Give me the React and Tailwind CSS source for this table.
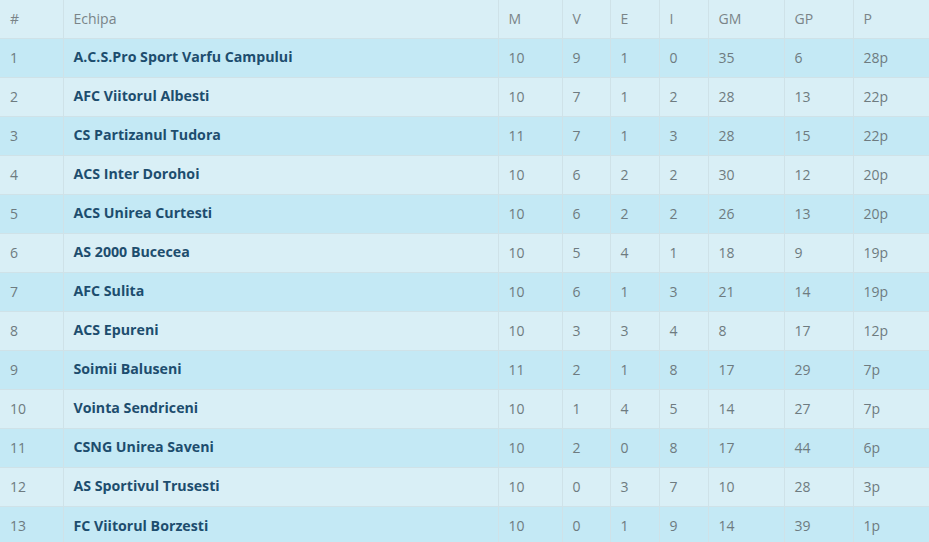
import React from "react";

const rows = [
  [1, "A.C.S.Pro Sport Varfu Campului", 10, 9, 1, 0, 35, 6, "28p"],
  [2, "AFC Viitorul Albesti", 10, 7, 1, 2, 28, 13, "22p"],
  [3, "CS Partizanul Tudora", 11, 7, 1, 3, 28, 15, "22p"],
  [4, "ACS Inter Dorohoi", 10, 6, 2, 2, 30, 12, "20p"],
  [5, "ACS Unirea Curtesti", 10, 6, 2, 2, 26, 13, "20p"],
  [6, "AS 2000 Bucecea", 10, 5, 4, 1, 18, 9, "19p"],
  [7, "AFC Sulita", 10, 6, 1, 3, 21, 14, "19p"],
  [8, "ACS Epureni", 10, 3, 3, 4, 8, 17, "12p"],
  [9, "Soimii Baluseni", 11, 2, 1, 8, 17, 29, "7p"],
  [10, "Vointa Sendriceni", 10, 1, 4, 5, 14, 27, "7p"],
  [11, "CSNG Unirea Saveni", 10, 2, 0, 8, 17, 44, "6p"],
  [12, "AS Sportivul Trusesti", 10, 0, 3, 7, 10, 28, "3p"],
  [13, "FC Viitorul Borzesti", 10, 0, 1, 9, 14, 39, "1p"],
];

const widths = ["w-[63px]", "w-[435px]", "w-[64px]", "w-[48px]", "w-[49px]", "w-[49px]", "w-[76px]", "w-[69px]", "w-[76px]"];
const heads = ["#", "Echipa", "M", "V", "E", "I", "GM", "GP", "P"];

export default function App() {
  return (
    <div className="w-[929px] h-[542px] overflow-hidden bg-[#d9eff6] font-['Open_Sans',sans-serif]">
      <table className="w-[929px] table-fixed border-collapse text-[14px]">
        <colgroup>
          {widths.map((w, i) => (
            <col key={i} className={w} />
          ))}
        </colgroup>
        <thead>
          <tr className="h-[38px] bg-[#d9eff6]">
            {heads.map((h, i) => (
              <th
                key={i}
                className="px-[10px] pb-[1px] text-left font-normal text-[#7a8488] border-l border-[#cfe2e8] first:border-l-0"
              >
                {h}
              </th>
            ))}
          </tr>
        </thead>
        <tbody>
          {rows.map((r, ri) => (
            <tr key={ri} className={`h-[39px] ${ri % 2 === 0 ? "bg-[#c4e9f5]" : "bg-[#d9eff6]"}`}>
              {r.map((c, ci) => (
                <td
                  key={ci}
                  className={`px-[10px] pb-[1px] text-left border-t border-l border-[#cfe2e8] first:border-l-0 ${
                    ci === 1 ? "font-bold text-[14.2px] text-[#1d4d6e]" : "text-[#6e7b80]"
                  }`}
                >
                  {c}
                </td>
              ))}
            </tr>
          ))}
        </tbody>
      </table>
    </div>
  );
}
